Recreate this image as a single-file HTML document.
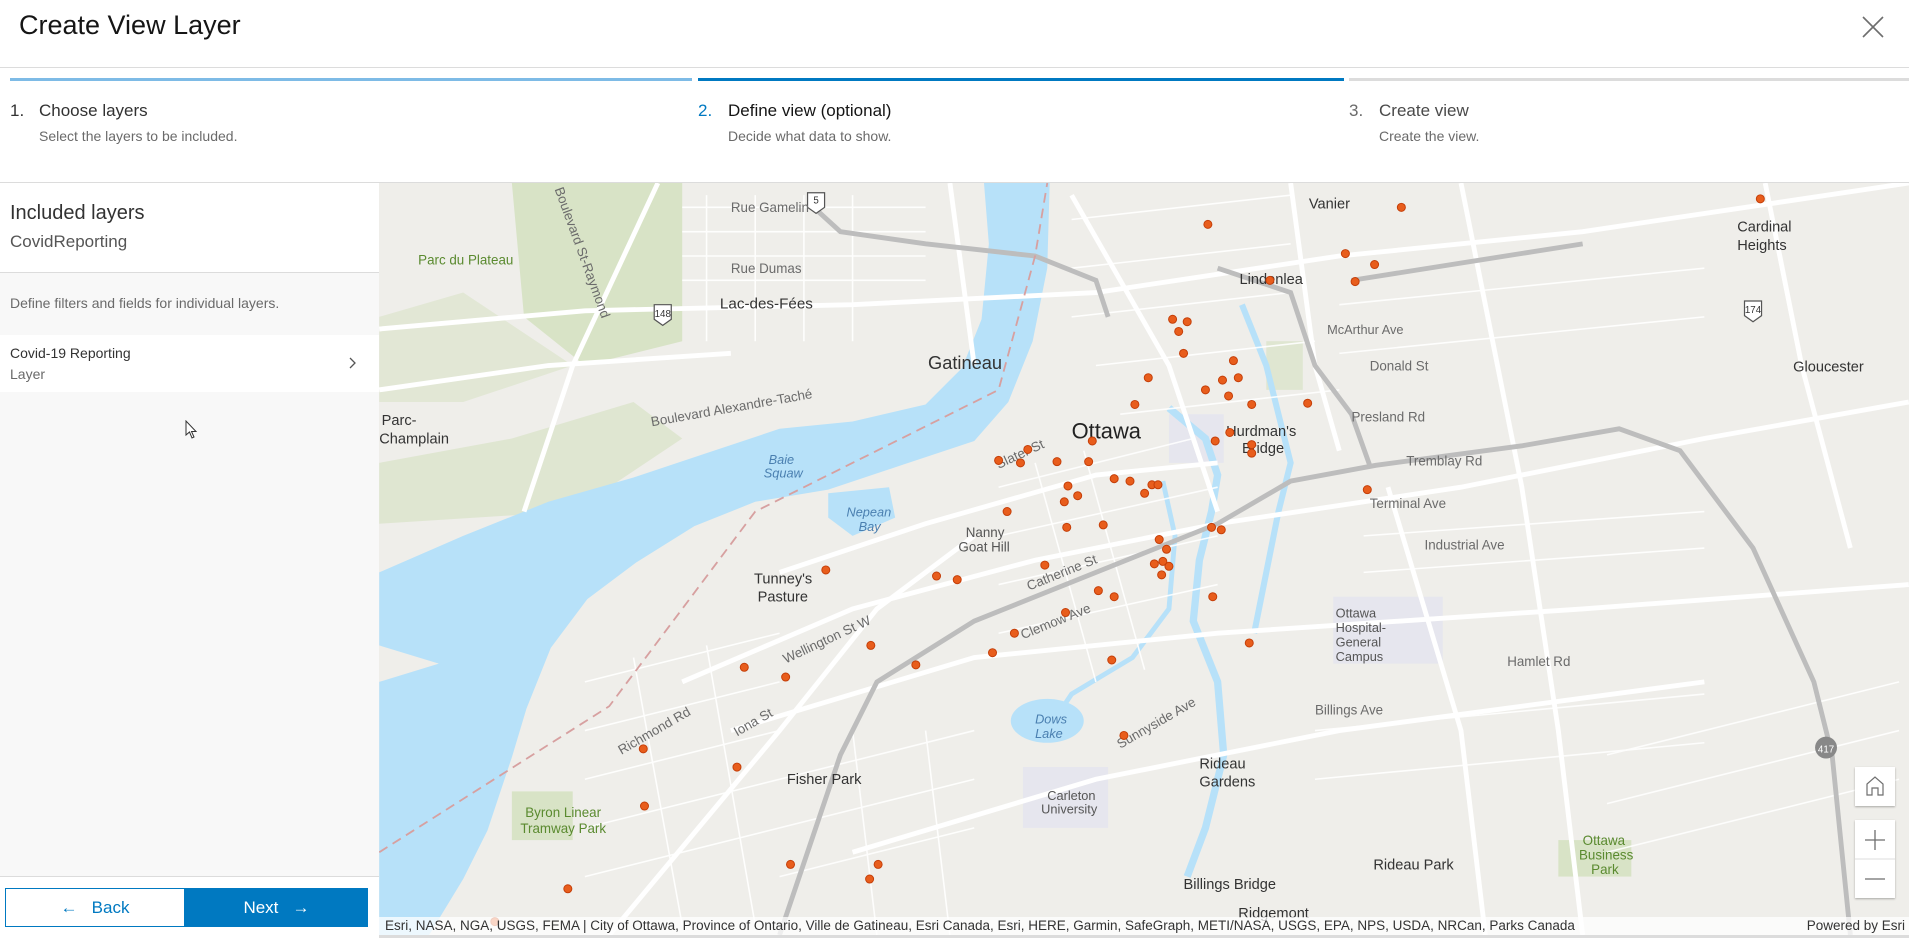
<!DOCTYPE html>
<html><head><meta charset="utf-8"><style>
*{margin:0;padding:0;box-sizing:border-box}
body{width:1909px;height:938px;overflow:hidden;background:#fff;font-family:"Liberation Sans",sans-serif;color:#323232;position:relative}
.abs{position:absolute}
.title{left:19px;top:10px;font-size:27px;color:#151515}
.steptitle{font-size:17px;color:#323232}
.stepsub{font-size:14px;color:#6a6a6a}
.btn{position:absolute;top:888px;height:39px;font-size:17px;display:flex;align-items:center;justify-content:center}
</style></head><body>
<div class="abs title">Create View Layer</div>
<svg class="abs" style="left:1862px;top:16px" width="22" height="22" viewBox="0 0 22 22"><path d="M1 1L21 21M21 1L1 21" stroke="#6e6e6e" stroke-width="1.6"/></svg>
<div class="abs" style="left:0;top:67px;width:1909px;height:1px;background:#dcdcdc"></div>
<div class="abs" style="left:10px;top:78px;width:682px;height:3px;background:#7ebbe6"></div>
<div class="abs" style="left:698px;top:78px;width:646px;height:3px;background:#0079c1"></div>
<div class="abs" style="left:1349px;top:78px;width:560px;height:3px;background:#dcdcdc"></div>

<div class="abs steptitle" style="left:10px;top:101px">1.</div>
<div class="abs steptitle" style="left:39px;top:101px">Choose layers</div>
<div class="abs stepsub" style="left:39px;top:128px">Select the layers to be included.</div>
<div class="abs steptitle" style="left:698px;top:101px;color:#0079c1">2.</div>
<div class="abs steptitle" style="left:728px;top:101px;color:#151515">Define view (optional)</div>
<div class="abs stepsub" style="left:728px;top:128px">Decide what data to show.</div>
<div class="abs steptitle" style="left:1349px;top:101px;color:#6a6a6a">3.</div>
<div class="abs steptitle" style="left:1379px;top:101px;color:#4a4a4a">Create view</div>
<div class="abs stepsub" style="left:1379px;top:128px">Create the view.</div>

<div class="abs" style="left:0;top:182px;width:1909px;height:1px;background:#dcdcdc"></div>
<!-- left panel -->
<div class="abs" style="left:0;top:183px;width:379px;height:755px;background:#f8f8f8"></div>
<div class="abs" style="left:0;top:183px;width:379px;height:90px;background:#fff;border-bottom:1px solid #dcdcdc"></div>
<div class="abs" style="left:10px;top:202px;font-size:20px;color:#323232">Included layers</div>
<div class="abs" style="left:10px;top:232px;font-size:17px;color:#555">CovidReporting</div>
<div class="abs" style="left:10px;top:295px;font-size:14px;color:#6a6a6a">Define filters and fields for individual layers.</div>
<div class="abs" style="left:0;top:335px;width:379px;height:57px;background:#fff"></div>
<div class="abs" style="left:10px;top:345px;font-size:14px;color:#323232">Covid-19 Reporting</div>
<div class="abs" style="left:10px;top:366px;font-size:14px;color:#6a6a6a">Layer</div>
<svg class="abs" style="left:349px;top:357px" width="8" height="12" viewBox="0 0 8 12"><path d="M1 1L6 6L1 11" fill="none" stroke="#555" stroke-width="1.3"/></svg>
<svg class="abs" style="left:185px;top:420px" width="14" height="20" viewBox="0 0 14 20"><path d="M1 1L1 15L4.5 12L7 18L9 17L6.5 11.5L11 11.5Z" fill="#fff" stroke="#333" stroke-width="1"/></svg>
<div class="abs" style="left:0;top:876px;width:379px;height:62px;background:#fff;border-top:1px solid #dcdcdc"></div>
<div class="btn" style="left:5px;width:180px;border:1px solid #0079c1;color:#0079c1;background:#fff">←&nbsp;&nbsp;&nbsp;Back</div>
<div class="btn" style="left:185px;width:183px;background:#0079c1;color:#fff">Next&nbsp;&nbsp;&nbsp;→</div>

<!-- map -->
<div class="abs" style="left:379px;top:183px;width:1530px;height:752px;overflow:hidden;background:#efeeea">
<svg width="1530" height="752" viewBox="311 150 1257 618" style="position:absolute;left:0;top:0" font-family="Liberation Sans,sans-serif">
<rect x="311" y="150" width="1257" height="618" fill="#efeeea"/>
<!-- parks -->
<g fill="#d8e3c6">
<path d="M420 150L560 150L560 280L480 300L430 260Z"/>
<path d="M311 260L380 240L470 300L380 330L311 330Z" opacity=".6"/>
<path d="M311 380L420 360L520 330L560 360L470 420L311 430Z" opacity=".7"/>
<rect x="1280" y="690" width="60" height="30"/>
<rect x="420" y="650" width="50" height="40"/>
<rect x="1040" y="280" width="30" height="40" opacity=".7"/>
</g>
<path d="M300 540L560 520" stroke="#e4e2dc" stroke-width="0"/>
<!-- hospital/university areas -->
<g fill="#e6e6ee"><rect x="1095" y="490" width="90" height="55"/><rect x="840" y="630" width="70" height="50"/><rect x="960" y="340" width="45" height="40"/></g>
<!-- river -->
<path fill="#b7e1f9" d="M808 150L862 150L860 220L848 280L828 330L800 362L740 382L680 402L620 412L570 432L522 462L482 492L452 532L432 582L420 622L400 682L380 722L352 768L311 768L311 560L360 545L311 530L311 470L380 440L450 412L520 392L580 372L640 352L700 346L760 332L790 302L806 262L812 200Z"/>
<path fill="#b7e1f9" d="M680 405L730 400L735 425L700 440L680 425Z"/>
<path fill="none" stroke="#b7e1f9" stroke-width="6" d="M960 335L990 360L1000 390L995 420L985 460L980 510L1000 560L1005 620L990 680L975 720"/>
<path fill="none" stroke="#b7e1f9" stroke-width="5" d="M1020 250L1040 300L1050 340L1060 380L1050 420L1040 470L1030 520"/>
<path fill="none" stroke="#b7e1f9" stroke-width="4" d="M955 395L965 440L960 500L930 540L880 570L860 600"/>
<ellipse cx="860" cy="592" rx="30" ry="18" fill="#b7e1f9"/>
<!-- streets -->
<g stroke="#fff" fill="none" stroke-width="4">
<path d="M311 270L480 255L700 250L900 240L1100 210L1300 190L1568 150"/>
<path d="M311 320L450 300L600 290"/>
<path d="M540 150L470 300L430 420"/>
<path d="M880 160L960 300L1000 420"/>
<path d="M640 470L760 430L900 390L1000 380"/>
<path d="M560 560L700 500L850 460L1000 430L1200 400L1400 360L1568 330"/>
<path d="M600 600L800 540L1000 520L1300 500L1568 480"/>
<path d="M700 700L900 640L1100 600L1400 560"/>
<path d="M1200 150L1250 400L1280 600L1300 768"/>
<path d="M1140 400L1200 600L1220 768"/>
<path d="M780 150L800 300"/>
<path d="M1060 150L1080 300L1100 370"/>
<path d="M500 768L640 600L720 500L800 440"/>
<path d="M1450 150L1480 300L1520 450"/>
</g>
<g stroke="#fff" stroke-width="1.3" fill="none" opacity=".9">
<path d="M560 170H760M560 190H760M560 210H760M560 230H760M580 160V280M620 160V280M660 160V280M700 160V280"/>
<path d="M880 180L1060 160M880 220L1060 200M880 260L1060 240M900 300L1080 280M920 340L1100 320"/>
<path d="M820 400L980 360M820 440L1000 400M820 480L1000 440M820 520L1000 480M850 380L900 560M890 370L940 550"/>
<path d="M1100 250L1400 220M1100 290L1400 260M1120 440L1400 420M1120 470L1400 450M1080 600L1400 570M1080 640L1400 610"/>
<path d="M480 560L640 520M480 600L640 560M480 640L640 600M480 680L640 640M480 720L640 680M520 540L560 760M580 530L620 760"/>
<path d="M640 640L800 600M640 680L800 640M640 720L800 680M700 600L720 768M760 600L780 768"/>
<path d="M1320 620L1560 560M1320 660L1560 600M1320 700L1560 640"/>
</g>
<!-- highways -->
<g stroke="#bdbdbd" fill="none" stroke-width="4">
<path d="M640 768L690 620L720 560L800 510L900 470L1000 430L1060 395L1130 382L1250 366L1330 352L1380 370L1440 450L1490 560L1505 620L1520 768"/>
<path d="M668 170L690 190L760 200L850 210L900 230L910 260"/>
<path d="M1000 220L1060 240L1080 300L1110 340L1125 382"/>
<path d="M1110 230L1300 200"/>
</g>
<path d="M311 700L500 580L620 420L720 370L820 320L850 210L860 150" stroke="#d7a0a0" stroke-width="1.5" stroke-dasharray="8 5" fill="none"/>
<!-- shields -->
<g fill="#fff" stroke="#555" stroke-width="1"><path d="M663 158h14v12l-7 5l-7-5Z"/><path d="M537 250h14v12l-7 5l-7-5Z"/><path d="M1433 247h14v12l-7 5l-7-5Z"/></g>
<g font-size="8" fill="#333" text-anchor="middle"><text x="670" y="167">5</text><text x="544" y="260">148</text><text x="1440" y="257">174</text></g>
<circle cx="1500" cy="614" r="9" fill="#888"/><text x="1500" y="618" font-size="8" fill="#fff" text-anchor="middle">417</text>
<!-- labels -->
<g font-size="11" fill="#6b6b6b">
<text x="600" y="174">Rue Gamelin</text><text x="600" y="224">Rue Dumas</text>
<text x="1090" y="274" font-size="10.5">McArthur Ave</text><text x="1125" y="304">Donald St</text>
<text x="1110" y="346">Presland Rd</text><text x="1155" y="382">Tremblay Rd</text>
<text x="1125" y="417">Terminal Ave</text><text x="1170" y="451">Industrial Ave</text>
<text x="1238" y="547">Hamlet Rd</text><text x="1080" y="587">Billings Ave</text>
<text x="820" y="385" transform="rotate(-25 820 385)">Slater St</text>
<text x="845" y="485" transform="rotate(-22 845 485)">Catherine St</text>
<text x="840" y="525" transform="rotate(-22 840 525)">Clemow Ave</text>
<text x="920" y="615" transform="rotate(-30 920 615)">Sunnyside Ave</text>
<text x="510" y="620" transform="rotate(-30 510 620)">Richmond Rd</text>
<text x="605" y="605" transform="rotate(-30 605 605)">Iona St</text>
<text x="645" y="545" transform="rotate(-25 645 545)">Wellington St W</text>
<text x="535" y="350" transform="rotate(-10 535 350)">Boulevard Alexandre-Taché</text>
<text x="455" y="155" transform="rotate(70 455 155)">Boulevard St-Raymond</text>
</g>
<g font-size="12" fill="#333">
<text x="591" y="253" font-size="12.5">Lac-des-Fées</text>
<text x="762" y="303" font-size="15">Gatineau</text>
<text x="880" y="360" font-size="18" fill="#222">Ottawa</text>
<text x="313" y="349">Parc-</text><text x="311" y="364">Champlain</text>
<text x="1075" y="171">Vanier</text>
<text x="1427" y="190">Cardinal</text><text x="1427" y="205">Heights</text>
<text x="1018" y="233">Lindenlea</text>
<text x="1473" y="305">Gloucester</text>
<text x="1007" y="358">Hurdman's</text><text x="1020" y="372">Bridge</text>
<text x="793" y="441" font-size="11" fill="#555">Nanny</text><text x="787" y="453" font-size="11" fill="#555">Goat Hill</text>
<text x="619" y="479">Tunney's</text><text x="622" y="494">Pasture</text>
<text x="985" y="631">Rideau</text><text x="985" y="646">Gardens</text>
<text x="646" y="644">Fisher Park</text>
<text x="1128" y="714">Rideau Park</text>
<text x="972" y="730">Billings Bridge</text>
<text x="1017" y="754">Ridgemont</text>
<text x="1097" y="507" font-size="10.5" fill="#555">Ottawa</text><text x="1097" y="519" font-size="10.5" fill="#555">Hospital-</text><text x="1097" y="531" font-size="10.5" fill="#555">General</text><text x="1097" y="543" font-size="10.5" fill="#555">Campus</text>
<text x="860" y="657" font-size="10.5" fill="#555">Carleton</text><text x="855" y="668" font-size="10.5" fill="#555">University</text>
</g>
<g font-size="11" fill="#5a8a2f"><text x="343" y="217">Parc du Plateau</text><text x="431" y="671">Byron Linear</text><text x="427" y="684">Tramway Park</text><text x="1300" y="694">Ottawa</text><text x="1297" y="706">Business</text><text x="1307" y="718">Park</text></g>
<g font-size="10.5" fill="#4a7fb0" font-style="italic"><text x="631" y="381">Baie</text><text x="627" y="392">Squaw</text><text x="695" y="424">Nepean</text><text x="705" y="436">Bay</text><text x="850" y="594">Dows</text><text x="850" y="606">Lake</text></g>
<!-- dots -->
<g fill="#e85d1c" stroke="#c43e08" stroke-width=".8">
<circle cx="992" cy="184" r="3.3"/><circle cx="1151" cy="170" r="3.3"/><circle cx="1446" cy="163" r="3.3"/><circle cx="1105" cy="208" r="3.3"/><circle cx="1129" cy="217" r="3.3"/><circle cx="1113" cy="231" r="3.3"/><circle cx="1043" cy="230" r="3.3"/><circle cx="963" cy="262" r="3.3"/><circle cx="975" cy="264" r="3.3"/><circle cx="968" cy="272" r="3.3"/><circle cx="972" cy="290" r="3.3"/><circle cx="1013" cy="296" r="3.3"/><circle cx="1004" cy="312" r="3.3"/><circle cx="1017" cy="310" r="3.3"/><circle cx="990" cy="320" r="3.3"/><circle cx="1009" cy="325" r="3.3"/><circle cx="1028" cy="332" r="3.3"/><circle cx="943" cy="310" r="3.3"/><circle cx="932" cy="332" r="3.3"/><circle cx="1074" cy="331" r="3.3"/><circle cx="998" cy="362" r="3.3"/><circle cx="1010" cy="355" r="3.3"/><circle cx="1028" cy="365" r="3.3"/><circle cx="1028" cy="372" r="3.3"/><circle cx="897" cy="362" r="3.3"/><circle cx="844" cy="369" r="3.3"/><circle cx="820" cy="378" r="3.3"/><circle cx="838" cy="380" r="3.3"/><circle cx="868" cy="379" r="3.3"/><circle cx="894" cy="379" r="3.3"/><circle cx="915" cy="393" r="3.3"/><circle cx="877" cy="399" r="3.3"/><circle cx="885" cy="407" r="3.3"/><circle cx="874" cy="412" r="3.3"/><circle cx="928" cy="395" r="3.3"/><circle cx="946" cy="398" r="3.3"/><circle cx="951" cy="398" r="3.3"/><circle cx="940" cy="405" r="3.3"/><circle cx="827" cy="420" r="3.3"/><circle cx="876" cy="433" r="3.3"/><circle cx="906" cy="431" r="3.3"/><circle cx="995" cy="433" r="3.3"/><circle cx="1003" cy="435" r="3.3"/><circle cx="1123" cy="402" r="3.3"/><circle cx="952" cy="443" r="3.3"/><circle cx="958" cy="451" r="3.3"/><circle cx="948" cy="463" r="3.3"/><circle cx="955" cy="461" r="3.3"/><circle cx="960" cy="465" r="3.3"/><circle cx="954" cy="472" r="3.3"/><circle cx="678" cy="468" r="3.3"/><circle cx="769" cy="473" r="3.3"/><circle cx="786" cy="476" r="3.3"/><circle cx="858" cy="464" r="3.3"/><circle cx="902" cy="485" r="3.3"/><circle cx="915" cy="490" r="3.3"/><circle cx="996" cy="490" r="3.3"/><circle cx="875" cy="503" r="3.3"/><circle cx="833" cy="520" r="3.3"/><circle cx="815" cy="536" r="3.3"/><circle cx="752" cy="546" r="3.3"/><circle cx="715" cy="530" r="3.3"/><circle cx="645" cy="556" r="3.3"/><circle cx="611" cy="548" r="3.3"/><circle cx="1026" cy="528" r="3.3"/><circle cx="913" cy="542" r="3.3"/><circle cx="923" cy="604" r="3.3"/><circle cx="528" cy="615" r="3.3"/><circle cx="605" cy="630" r="3.3"/><circle cx="529" cy="662" r="3.3"/><circle cx="649" cy="710" r="3.3"/><circle cx="721" cy="710" r="3.3"/><circle cx="714" cy="722" r="3.3"/><circle cx="466" cy="730" r="3.3"/><circle cx="406" cy="757" r="3.3"/>
</g>
</svg>
<!-- controls -->
<div class="abs" style="left:1476px;top:584px;width:40px;height:39px;background:#fff;box-shadow:0 1px 2px rgba(0,0,0,.3)">
<svg width="40" height="39" viewBox="0 0 40 39"><path d="M12 28V17L20 10L28 17V28H23V21H17V28Z" fill="none" stroke="#6e6e6e" stroke-width="1.2"/></svg></div>
<div class="abs" style="left:1476px;top:637px;width:40px;height:78px;background:#fff;box-shadow:0 1px 2px rgba(0,0,0,.3)">
<svg width="40" height="78" viewBox="0 0 40 78"><path d="M20 10V30M10 20H30M10 59H30" stroke="#6e6e6e" stroke-width="1.3"/><path d="M0 39H40" stroke="#ddd"/></svg></div>
<div class="abs" style="left:0;top:734px;width:1530px;height:18px;background:rgba(255,255,255,.75);font-size:13.5px;color:#333;line-height:18px;padding-left:6px;white-space:nowrap">Esri, NASA, NGA, USGS, FEMA | City of Ottawa, Province of Ontario, Ville de Gatineau, Esri Canada, Esri, HERE, Garmin, SafeGraph, METI/NASA, USGS, EPA, NPS, USDA, NRCan, Parks Canada<span style="position:absolute;right:4px;top:0">Powered by Esri</span></div>
</div>
<div class="abs" style="left:379px;top:935px;width:1530px;height:3px;background:#dcdcdc"></div>
</body></html>
